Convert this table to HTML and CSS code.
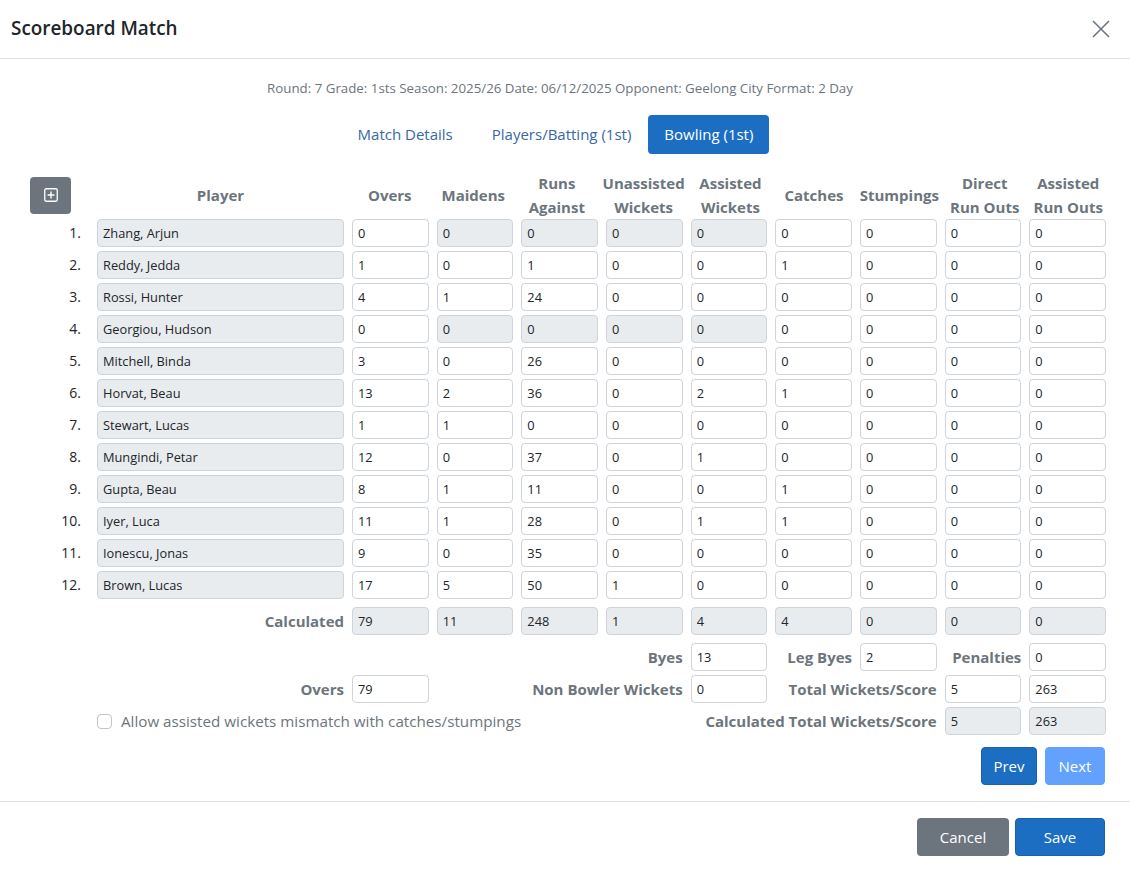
FILE: index.html
```html
<!DOCTYPE html>
<html lang="en">
<head>
<meta charset="utf-8">
<title>Scoreboard Match</title>
<link rel="stylesheet" href="styles.css">
</head>
<body>
<div class="modal">
  <div class="modal-header">
    <h5 class="modal-title">Scoreboard Match</h5>
    <button class="btn-close" aria-label="Close">
      <svg width="18" height="18" viewBox="0 0 18 18"><path d="M1 1 L17 17 M17 1 L1 17" stroke="#6c757d" stroke-width="1.6" fill="none"/></svg>
    </button>
  </div>
  <div class="modal-body">
    <div class="info">Round: 7 Grade: 1sts Season: 2025/26 Date: 06/12/2025 Opponent: Geelong City Format: 2 Day</div>
    <nav class="tabs">
      <a class="tab">Match Details</a>
      <a class="tab tab-mid">Players/Batting (1st)</a>
      <a class="tab active">Bowling (1st)</a>
    </nav>

    <div class="grid head">
      <div class="hcell add-cell">
        <button class="btn-add" aria-label="Add">
          <svg width="14" height="14" viewBox="0 0 14 14"><rect x="0.75" y="0.75" width="12.5" height="12.5" rx="1.5" fill="none" stroke="#fff" stroke-width="1.3"/><path d="M7 3.6 V10.4 M3.6 7 H10.4" stroke="#fff" stroke-width="1.4"/></svg>
        </button>
      </div>
      <div class="hcell">Player</div>
      <div class="hcell">Overs</div>
      <div class="hcell">Maidens</div>
      <div class="hcell">Runs<br>Against</div>
      <div class="hcell">Unassisted<br>Wickets</div>
      <div class="hcell">Assisted<br>Wickets</div>
      <div class="hcell">Catches</div>
      <div class="hcell">Stumpings</div>
      <div class="hcell">Direct<br>Run Outs</div>
      <div class="hcell">Assisted<br>Run Outs</div>
    </div>

    <div class="grid rows">
      <div class="num">1.</div><input class="fc ro" value="Zhang, Arjun" disabled><input class="fc" value="0"><input class="fc ro" value="0" disabled><input class="fc ro" value="0" disabled><input class="fc ro" value="0" disabled><input class="fc ro" value="0" disabled><input class="fc" value="0"><input class="fc" value="0"><input class="fc" value="0"><input class="fc" value="0">
      <div class="num">2.</div><input class="fc ro" value="Reddy, Jedda" disabled><input class="fc" value="1"><input class="fc" value="0"><input class="fc" value="1"><input class="fc" value="0"><input class="fc" value="0"><input class="fc" value="1"><input class="fc" value="0"><input class="fc" value="0"><input class="fc" value="0">
      <div class="num">3.</div><input class="fc ro" value="Rossi, Hunter" disabled><input class="fc" value="4"><input class="fc" value="1"><input class="fc" value="24"><input class="fc" value="0"><input class="fc" value="0"><input class="fc" value="0"><input class="fc" value="0"><input class="fc" value="0"><input class="fc" value="0">
      <div class="num">4.</div><input class="fc ro" value="Georgiou, Hudson" disabled><input class="fc" value="0"><input class="fc ro" value="0" disabled><input class="fc ro" value="0" disabled><input class="fc ro" value="0" disabled><input class="fc ro" value="0" disabled><input class="fc" value="0"><input class="fc" value="0"><input class="fc" value="0"><input class="fc" value="0">
      <div class="num">5.</div><input class="fc ro" value="Mitchell, Binda" disabled><input class="fc" value="3"><input class="fc" value="0"><input class="fc" value="26"><input class="fc" value="0"><input class="fc" value="0"><input class="fc" value="0"><input class="fc" value="0"><input class="fc" value="0"><input class="fc" value="0">
      <div class="num">6.</div><input class="fc ro" value="Horvat, Beau" disabled><input class="fc" value="13"><input class="fc" value="2"><input class="fc" value="36"><input class="fc" value="0"><input class="fc" value="2"><input class="fc" value="1"><input class="fc" value="0"><input class="fc" value="0"><input class="fc" value="0">
      <div class="num">7.</div><input class="fc ro" value="Stewart, Lucas" disabled><input class="fc" value="1"><input class="fc" value="1"><input class="fc" value="0"><input class="fc" value="0"><input class="fc" value="0"><input class="fc" value="0"><input class="fc" value="0"><input class="fc" value="0"><input class="fc" value="0">
      <div class="num">8.</div><input class="fc ro" value="Mungindi, Petar" disabled><input class="fc" value="12"><input class="fc" value="0"><input class="fc" value="37"><input class="fc" value="0"><input class="fc" value="1"><input class="fc" value="0"><input class="fc" value="0"><input class="fc" value="0"><input class="fc" value="0">
      <div class="num">9.</div><input class="fc ro" value="Gupta, Beau" disabled><input class="fc" value="8"><input class="fc" value="1"><input class="fc" value="11"><input class="fc" value="0"><input class="fc" value="0"><input class="fc" value="1"><input class="fc" value="0"><input class="fc" value="0"><input class="fc" value="0">
      <div class="num">10.</div><input class="fc ro" value="Iyer, Luca" disabled><input class="fc" value="11"><input class="fc" value="1"><input class="fc" value="28"><input class="fc" value="0"><input class="fc" value="1"><input class="fc" value="1"><input class="fc" value="0"><input class="fc" value="0"><input class="fc" value="0">
      <div class="num">11.</div><input class="fc ro" value="Ionescu, Jonas" disabled><input class="fc" value="9"><input class="fc" value="0"><input class="fc" value="35"><input class="fc" value="0"><input class="fc" value="0"><input class="fc" value="0"><input class="fc" value="0"><input class="fc" value="0"><input class="fc" value="0">
      <div class="num">12.</div><input class="fc ro" value="Brown, Lucas" disabled><input class="fc" value="17"><input class="fc" value="5"><input class="fc" value="50"><input class="fc" value="1"><input class="fc" value="0"><input class="fc" value="0"><input class="fc" value="0"><input class="fc" value="0"><input class="fc" value="0">
    </div>

    <div class="grid calc">
      <div class="lbl span-1-3">Calculated</div>
      <input class="fc ro" value="79" disabled><input class="fc ro" value="11" disabled><input class="fc ro" value="248" disabled><input class="fc ro" value="1" disabled><input class="fc ro" value="4" disabled><input class="fc ro" value="4" disabled><input class="fc ro" value="0" disabled><input class="fc ro" value="0" disabled><input class="fc ro" value="0" disabled>
    </div>

    <div class="grid totals">
      <div class="lbl c1-7">Byes</div>
      <input class="fc c7" value="13">
      <div class="lbl c8">Leg Byes</div>
      <input class="fc c9" value="2">
      <div class="lbl c10">Penalties</div>
      <input class="fc c11" value="0">

      <div class="lbl c1-3">Overs</div>
      <input class="fc c3" value="79">
      <div class="lbl c4-7">Non Bowler Wickets</div>
      <input class="fc c7" value="0">
      <div class="lbl c8-10">Total Wickets/Score</div>
      <input class="fc c10" value="5">
      <input class="fc c11" value="263">

      <label class="check c2-7"><input type="checkbox" class="cb"><span>Allow assisted wickets mismatch with catches/stumpings</span></label>
      <div class="lbl c7-10">Calculated Total Wickets/Score</div>
      <input class="fc ro c10" value="5" disabled>
      <input class="fc ro c11" value="263" disabled>
    </div>

    <div class="pager">
      <button class="btn btn-primary w-prev">Prev</button>
      <button class="btn btn-primary disabled w-next">Next</button>
    </div>
  </div>
  <div class="modal-footer">
    <button class="btn btn-secondary w-cancel">Cancel</button>
    <button class="btn btn-primary w-save">Save</button>
  </div>
</div>
</body>
</html>
```

FILE: styles.css
```css
html, body {
  margin: 0;
  padding: 0;
  background: #fff;
}
body {
  font-family: "Open Sans", "Noto Sans", sans-serif;
  color: #212529;
  font-size: 15px;
}
.modal {
  width: 1130px;
}
.modal-header {
  height: 58px;
  border-bottom: 1px solid #dee2e6;
  display: flex;
  align-items: center;
  justify-content: space-between;
  padding: 0 20px 0 11px;
}
.modal-title {
  margin: 0 0 2px;
  font-size: 18.9px;
  font-weight: 600;
  color: #212529;
  line-height: 1.5;
}
.btn-close {
  border: 0;
  background: transparent;
  padding: 0;
  width: 18px;
  height: 18px;
  display: flex;
}
.modal-body {
  padding: 19px 24px 0 30px;
}
.info {
  text-align: center;
  font-size: 13.3px;
  line-height: 20px;
  color: #6c757d;
  margin-right: 16px;
}
.tabs {
  display: flex;
  justify-content: center;
  margin-top: 17px;
  margin-right: 25px;
  gap: 1px;
}
.tab {
  display: block;
  padding: 0 16px;
  height: 39px;
  line-height: 39px;
  font-size: 15px;
  color: #3768a6;
  border-radius: 4px;
  text-decoration: none;
}
.tab-mid {
  margin-left: 6px;
}
.tab.active {
  background: #1b6ec2;
  color: #fff;
}
.grid {
  display: grid;
  grid-template-columns: 59px 247px repeat(9, 1fr);
  column-gap: 8px;
  width: 1076px;
}
.head {
  margin-top: 17px;
  height: 48px;
  align-items: center;
}
.hcell {
  text-align: center;
  font-weight: 700;
  color: #6c757d;
  font-size: 15px;
  line-height: 24px;
  white-space: nowrap;
}
.add-cell {
  text-align: left;
  display: flex;
}
.btn-add {
  width: 41px;
  height: 37px;
  background: #6c757d;
  border: 0;
  border-radius: 4px;
  display: flex;
  align-items: center;
  justify-content: center;
  padding: 0;
}
.rows {
  row-gap: 4px;
}
.num {
  text-align: right;
  padding-right: 8px;
  line-height: 28px;
  font-size: 14px;
  color: #212529;
}
.fc {
  box-sizing: border-box;
  width: 100%;
  min-width: 0;
  height: 28px;
  margin: 0;
  padding: 0 5px;
  border: 1px solid #ced4da;
  border-radius: 4px;
  background: #fff;
  font-family: "Open Sans", "Noto Sans", sans-serif;
  font-size: 12.8px;
  color: #212529;
  -webkit-text-fill-color: #212529;
  opacity: 1;
}
.fc.ro {
  background: #e9ecef;
}
.calc {
  margin-top: 8px;
}
.lbl {
  text-align: right;
  font-weight: 700;
  color: #6c757d;
  font-size: 15px;
  line-height: 28px;
  white-space: nowrap;
}
.span-1-3 { grid-column: 1 / 3; }
.totals {
  margin-top: 8px;
  row-gap: 4px;
}
.c1-3 { grid-column: 1 / 3; }
.c1-7 { grid-column: 1 / 7; }
.c2-7 { grid-column: 2 / 7; }
.c3 { grid-column: 3; }
.c4-7 { grid-column: 4 / 7; }
.c7 { grid-column: 7; }
.c7-10 { grid-column: 7 / 10; }
.c8 { grid-column: 8; }
.c8-10 { grid-column: 8 / 10; }
.c9 { grid-column: 9; }
.c10 { grid-column: 10; }
.c11 { grid-column: 11; }
.check {
  display: flex;
  align-items: center;
  gap: 9px;
  color: #6c757d;
  font-size: 15.2px;
  white-space: nowrap;
}
.cb {
  -webkit-appearance: none;
  appearance: none;
  width: 15px;
  height: 15px;
  margin: 0;
  border: 1px solid #bfc5cb;
  border-radius: 4px;
  background: #fff;
  flex: none;
}
.pager {
  display: flex;
  justify-content: flex-end;
  gap: 8px;
  margin-top: 12px;
  margin-right: 1px;
  margin-bottom: 16px;
}
.btn {
  height: 38px;
  border: 0;
  border-radius: 4px;
  padding: 0;
  font-family: "Open Sans", "Noto Sans", sans-serif;
  font-size: 15px;
  color: #fff;
}
.btn-primary {
  background: #1b6ec2;
  border: 1px solid #1861ac;
}
.btn-primary.disabled {
  background: #62a1fe;
  border-color: #62a1fe;
}
.btn-secondary {
  background: #6c757d;
}
.modal-footer {
  border-top: 1px solid #dee2e6;
  display: flex;
  justify-content: flex-end;
  gap: 6px;
  padding: 16px 25px 13px 0;
}
.w-prev { width: 56px; }
.w-next { width: 60px; }
.w-cancel { width: 92px; }
.w-save { width: 90px; }
```
